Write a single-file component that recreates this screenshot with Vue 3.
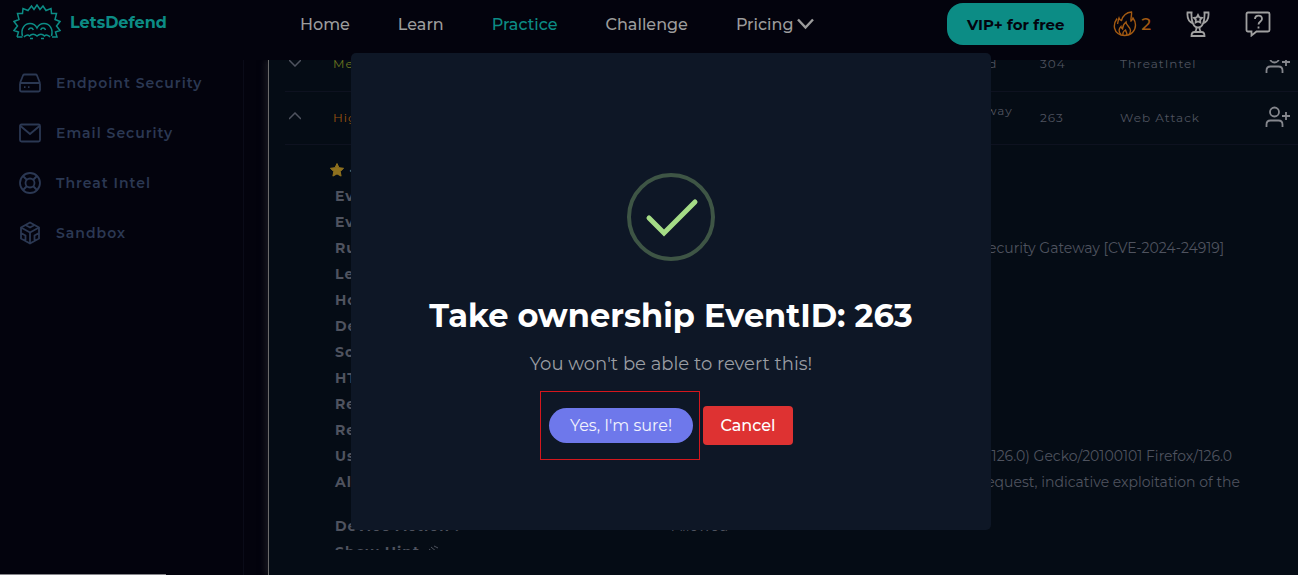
<script setup>
const tools = [
  { icon: 'drive', label: 'Endpoint Security' },
  { icon: 'mail', label: 'Email Security' },
  { icon: 'ring', label: 'Threat Intel' },
  { icon: 'box', label: 'Sandbox' },
]

const links = [
  { label: 'Home' },
  { label: 'Learn' },
  { label: 'Practice', active: true },
  { label: 'Challenge' },
  { label: 'Pricing', menu: true },
]

const alerts = [
  { level: 'Medium', rule: 'SOC282 - Phishing Alert - Deceptive Mail Domain Detected', id: 304, type: 'ThreatIntel', open: false },
  { level: 'High', rule: 'SOC287 - Arbitrary File Read on Checkpoint Security Gateway [CVE-2024-24919]', id: 263, type: 'Web Attack', open: true },
]

const details = [
  ['Event ID :', '263'],
  ['Event Time :', 'Jun, 06, 2024, 03:12 PM'],
  ['Rule :', 'SOC287 - Arbitrary File Read on Checkpoint Security Gateway [CVE-2024-24919]'],
  ['Level :', 'Security Analyst'],
  ['Hostname :', 'CP-Spark-Gateway-01'],
  ['Destination IP :', '172.16.20.146'],
  ['Source IP :', '203.160.68.12'],
  ['HTTP Method :', 'POST'],
  ['Requested URL :', '172.16.20.146/clients/MyCRL'],
  ['Request :', 'aCSHELL/../../../../etc/passwd'],
  ['User-Agent :', 'Mozilla/5.0 (Macintosh; Intel Mac OS X 10.15; rv:126.0) Gecko/20100101 Firefox/126.0'],
  ['Alert Reason :', 'Characteristics exploit pattern Detected on Request, indicative exploitation of the CVE-2024-24919.'],
  ['Device Action :', 'Allowed'],
]
</script>

<template>
  <div class="page">
    <header class="topbar">
      <a class="brand" href="#">
        <svg class="mascot" viewBox="0 0 48 36" aria-hidden="true">
          <path d="M4 33 5.500 28 1 26.500 4.500 22 1 17.500 6 15.500 4.500 9.500 9.500 9.500 10 4.500 15 6.500 18.500 2 21 5.500 24 1 27 5.500 30 2 33 6.500 38 4.500 38.500 9.500 43.500 9.500 42 15.500 47 17.500 43.500 22 47 26.500 42.500 28 44 33 39 33" />
          <path d="M4 33h5.500M9.500 32c-2-7 2-12.500 7.500-12.500 3 0 5.500 1.500 7 4.500 1.500-3 4-4.500 7-4.500C36.500 19.500 40.500 25 38.500 32" />
          <path d="M15.500 26c.8-2.600 4-2.600 4.800 0M27.700 26c.8-2.600 4-2.600 4.800 0M11 33c1.500-2 4-2.500 5.500-1 2-2.500 5-2.500 7.500 0 2.500-2.500 5.500-2.500 7.500 0 1.500-1.500 4-1 5.500 1M17 34.500h3M28 34.500h3" />
        </svg>
        <span>LetsDefend</span>
      </a>
      <nav class="links">
        <a v-for="l in links" :key="l.label" href="#" :class="{ active: l.active }">
          {{ l.label }}
          <svg v-if="l.menu" width="17" height="12" viewBox="0 0 17 12" aria-hidden="true"><path d="M1 1.500l7.500 8L16 1.500" fill="none" stroke="currentColor" stroke-width="2.400" /></svg>
        </a>
      </nav>
      <div class="actions">
        <button class="vip" type="button">VIP+ for free</button>
        <a class="streak" href="#">
          <svg width="24" height="26" viewBox="0 0 24 26" aria-hidden="true">
            <path d="M4 7.500C1.500 11 1 14 1.500 17c1 4.500 5 7.500 10 7.500 6.500 0 11-4.500 11-10.500 0-3-1-5-2.500-7-.5 1.500-1 2.500-2 3-.5-3 1-5.500.5-9C13.500 1.500 10 4.500 8.500 9.500c-1.200-.3-2-1.200-2.500-2.500C5 9.500 5 11.500 4.500 13" />
            <path d="M8 23.500C5 20.500 6 17.500 8 15.500c.2 1.300.6 2 1.500 2.500.3-3 1.500-5.500 3.500-7 0 3.500 4.500 5 4.500 8.500 0 2-.8 3.500-2.200 4.500M10 24c-.5-2.500.8-4 2.500-5 .5 2 2 3 1.200 5" />
          </svg>
          <span>2</span>
        </a>
        <button class="icon" type="button" aria-label="Leaderboard">
          <svg width="24" height="26" viewBox="0 0 24 26" aria-hidden="true">
            <path d="M5.500 1.500c-.5 9 2 15 6.500 15s7-6 6.500-15M6.500 1.500h-5C1 7 3 11 7 12.500M17.500 1.500h5C23 7 21 11 17 12.500" />
            <path d="M12 4l1.300 2.400 2.700.5-1.900 2 .3 2.700L12 10.500l-2.400 1.100.3-2.700L8 6.900l2.700-.5zM10.500 16.500c0 2-.5 3.500-1.500 4.500h6c-1-1-1.500-2.500-1.500-4.500M5.500 25c0-2.500 1-4 3-4h7c2 0 3 1.500 3 4z" />
          </svg>
        </button>
        <button class="icon" type="button" aria-label="Help">
          <svg width="26" height="26" viewBox="0 0 26 26" aria-hidden="true">
            <path d="M3 1.500h20q1.500 0 1.500 1.500v16q0 1.500-1.500 1.500H11.500L6.500 24.500v-4H3Q1.500 20.500 1.500 19V3Q1.500 1.500 3 1.500z" />
            <path d="M10 8c0-4.500 7-4.500 7 0 0 2.500-3.500 2.500-3.500 5.500M13.500 15.500v2" />
          </svg>
        </button>
      </div>
    </header>

    <div class="body">
      <aside class="sidebar">
        <a v-for="t in tools" :key="t.label" href="#">
          <svg width="24" height="24" viewBox="0 0 24 24" aria-hidden="true">
            <g v-if="t.icon === 'drive'"><path d="M2 12L5 4.500Q5.500 3.500 6.500 3.500h11q1 0 1.500 1L22 12M3 12h18q1 0 1 1v6q0 1.500-1.500 1.500h-17Q2 20.500 2 19v-6q0-1 1-1z" /><path d="M6 16.200h1.500M10 16.200h1.500" /></g>
            <g v-else-if="t.icon === 'mail'"><rect x="2" y="3.500" width="20" height="17" rx="1.500" /><path d="M2.500 5l9.500 8 9.500-8" /></g>
            <g v-else-if="t.icon === 'ring'"><circle cx="12" cy="12" r="10" /><circle cx="12" cy="12" r="4.500" /><path d="M5 5l4 4M19 5l-4 4M5 19l4-4M19 19l-4-4" /></g>
            <g v-else><path d="M12 1.500l9 5v11l-9 5-9-5v-11zM3 6.500l9 5 9-5M12 11.500v11M7.500 4l4.500 2.500L16.500 4M3 12l4.500 2.500v5.500M21 12l-4.500 2.500v5.500" /></g>
          </svg>
          <span>{{ t.label }}</span>
        </a>
      </aside>

      <main class="panel">
        <div class="scroller">
          <table class="alerts">
            <colgroup><col class="c-toggle"><col class="c-level"><col class="c-rule"><col class="c-id"><col class="c-type"><col class="c-own"></colgroup>
            <tbody>
              <tr v-for="a in alerts" :key="a.id">
                <td>
                  <button class="toggle" type="button" :aria-label="a.open ? 'Collapse' : 'Expand'">
                    <svg width="12" height="8" viewBox="0 0 12 8" aria-hidden="true"><path :d="a.open ? 'M0 7l6-6 6 6' : 'M0 1l6 6 6-6'" /></svg>
                  </button>
                </td>
                <td :class="a.level.toLowerCase()">{{ a.level }}</td>
                <td>{{ a.rule }}</td>
                <td>{{ a.id }}</td>
                <td>{{ a.type }}</td>
                <td>
                  <button class="own" type="button" aria-label="Take ownership">
                    <svg width="26" height="22" viewBox="0 0 26 22" aria-hidden="true"><circle cx="9.500" cy="6" r="4.500" /><path d="M1.500 21v-2.500q0-4 4-4h8q4 0 4 4V21M21 6v8M17 10h8" /></svg>
                  </button>
                </td>
              </tr>
            </tbody>
          </table>
          <div class="event">
            <div class="rating">
              <svg width="16" height="16" viewBox="0 0 16 16" aria-hidden="true"><path d="M8 1.500l2 4.200 4.600.6-3.400 3.200.9 4.600L8 11.900l-4.100 2.200.9-4.600L1.400 6.300 6 5.700z" /></svg>
              <span>• Event details</span>
            </div>
            <dl>
              <div v-for="d in details" :key="d[0]"><dt>{{ d[0] }}</dt><dd>{{ d[1] }}</dd></div>
              <div><dt>Show Hint <svg width="14" height="12" viewBox="0 0 14 12" aria-hidden="true"><path d="M1 12L8 5M4 4l6 5M6 2l6 5M9 1l4 2" /></svg></dt></div>
            </dl>
          </div>
        </div>
      </main>
    </div>

    <div class="status"></div>

    <div class="overlay">
      <section class="dialog" role="dialog" aria-modal="true" aria-labelledby="dialog-title">
        <svg class="success" width="88" height="88" viewBox="0 0 88 88" aria-hidden="true">
          <circle cx="44" cy="44" r="42" />
          <path d="M22 45L37 60 68 29" />
        </svg>
        <h2 id="dialog-title">Take ownership EventID: 263</h2>
        <p>You won't be able to revert this!</p>
        <div class="choices">
          <div class="marked"><button class="yes" type="button">Yes, I'm sure!</button></div>
          <button class="no" type="button">Cancel</button>
        </div>
      </section>
    </div>
  </div>
</template>

<style>
body { background: #03030d; }
</style>

<style scoped>
.page {
  position: relative;
  display: flex;
  flex-direction: column;
  height: 100vh;
  overflow: hidden;
  background: #03030d;
  color: #4f535f;
  font-family: "Montserrat", "Inter", "Open Sans", sans-serif;
  font-size: 14px;
}
* { box-sizing: border-box; }
a { color: inherit; text-decoration: none; }
button { font: inherit; border: 0; padding: 0; background: none; color: inherit; cursor: pointer; }
svg { fill: none; stroke: currentColor; flex: none; }

.topbar { display: flex; flex: none; height: 60px; padding: 0 27px 12px 13px; align-items: center; }
.brand { display: flex; align-items: center; gap: 9px; width: 287px; padding-bottom: 4px; color: #0c8c85; font-size: 16px; font-weight: 700; }
.mascot { width: 48px; height: 36px; stroke-width: 1.500; }
.links { display: flex; gap: 48px; color: #9c9c9c; font-size: 16px; font-weight: 500; }
.links a { display: flex; align-items: center; gap: 4px; }
.links .active { color: #0c8c85; }
.actions { display: flex; align-items: center; margin-left: auto; color: #a0a0a0; }
.vip { width: 137px; height: 42px; border-radius: 16px; background: #0c8c85; color: #03030d; font-size: 15px; font-weight: 700; }
.streak { display: flex; align-items: center; gap: 4px; margin-left: 29px; color: #a35a12; font-size: 17px; font-weight: 500; }
.streak svg { stroke-width: 1.400; }
.icon { display: flex; margin-left: 35px; }
.icon svg { stroke-width: 1.800; }

.body { display: flex; flex: 1; min-height: 0; overflow: hidden; }
.sidebar { flex: none; width: 244px; margin-top: -2px; padding-left: 18px; border-right: 1px solid #0a0b18; color: #2b3853; }
.sidebar a { display: flex; align-items: center; gap: 14px; height: 50px; font-size: 14px; font-weight: 600; letter-spacing: 1px; }
.sidebar svg { stroke-width: 1.800; }
.panel { flex: 1; min-width: 0; margin-left: 24px; padding: 0 0 25px 16px; border-left: 1px solid #6b6b6b; background: #050c15; box-shadow: -3px 0 6px #17171f; clip-path: inset(0 0 0 -12px); }
.scroller { height: 100%; overflow: hidden; }

.alerts { width: 100%; margin-top: -22px; border-collapse: collapse; table-layout: fixed; font-size: 12px; line-height: 14px; letter-spacing: 1px; }
.alerts td { height: 53px; padding: 0; border-bottom: 1px solid #0e1220; }
.c-toggle { width: 48px; }
.c-level { width: 254px; }
.c-id { width: 80px; }
.c-type { width: 145px; }
.c-own { width: 33px; }
.medium { color: #6c751f; }
.high { color: #9a5410; }
.toggle { display: flex; margin: 0 0 3px 4px; }
.toggle svg { stroke-width: 1.500; }
.own { display: flex; margin-bottom: 2px; color: #85878d; }
.own svg { stroke-width: 1.800; }

.event { padding: 16px 48px 0 44px; }
.rating { display: flex; align-items: center; gap: 4px; height: 18px; color: #6b6b6b; }
.rating svg { fill: #8f711e; stroke: #8f711e; stroke-linejoin: round; }
dl { margin: 4px 0 0 6px; line-height: 18px; }
dl div { display: flex; padding: 4px 0; }
dt { flex: none; width: 337px; font-weight: 700; letter-spacing: 1px; }
dd { margin: 0; min-width: 0; }
dt svg { vertical-align: baseline; }

.status { position: absolute; left: 0; bottom: 0; width: 166px; height: 1px; background: #85858a; }

.overlay { position: absolute; inset: 0; display: flex; align-items: center; justify-content: center; padding: 8px 0 0 44px; }
.dialog { display: flex; flex-direction: column; align-items: center; width: 640px; padding: 120px 20px 85px; border-radius: 5px; background: #0e1726; color: #fff; }
.success circle { stroke: #3e5545; stroke-width: 4; }
.success path { stroke: #a5dc86; stroke-width: 5; stroke-linecap: round; }
h2 { margin: 35px 0 0; font-size: 32px; line-height: 40px; font-weight: 700; }
p { margin: 16px 0 0; color: #9a9da3; font-size: 18px; line-height: 24px; }
.choices { display: flex; align-items: center; gap: 10px; margin-top: 30px; }
.marked { position: relative; }
.marked::after { content: ""; position: absolute; inset: -17px -7px -17px -9px; border: 1px solid #d5171d; pointer-events: none; }
.yes, .no { display: block; font-size: 16px; font-weight: 500; }
.yes { width: 144px; height: 35px; border-radius: 18px; background: #6e78eb; color: #f2f3fd; font-weight: 400; }
.no { width: 90px; height: 39px; border-radius: 4px; background: #de3232; }
</style>
